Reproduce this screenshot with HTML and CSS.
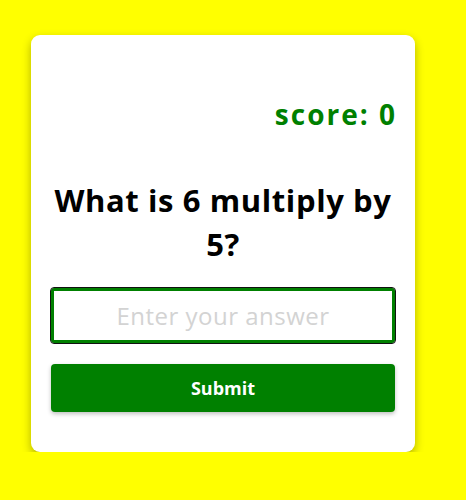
FILE: index.html
```html
<!DOCTYPE html>
<html>
<head>
<meta charset="utf-8">
<link rel="stylesheet" href="styles.css">
</head>
<body>
<div class="card">
  <div class="score">score: 0</div>
  <h1 class="question">What is 6 multiply by 5?</h1>
  <input class="answer" type="text" placeholder="Enter your answer">
  <button class="submit">Submit</button>
</div>
</body>
</html>
```
FILE: styles.css
```css
html, body {
  margin: 0;
  background: #ffff00;
}
body {
  padding: 35px 0 0 31px;
  font-family: "Comic Sans MS", "Open Sans", sans-serif;
}
.card {
  width: 344px;
  background: #fff;
  border-radius: 9px;
  padding: 60px 20px 40px;
  box-shadow: 0 4px 10px rgba(0,0,0,0.3);
  display: flex;
  flex-direction: column;
}
.score {
  text-align: right;
  color: #008000;
  font-weight: bold;
  font-size: 28px;
  line-height: 39px;
  letter-spacing: 2px;
  margin-right: -2px;
}
.question {
  margin: 44px 0 22px;
  text-align: center;
  font-size: 31px;
  line-height: 44px;
  font-weight: bold;
  color: #000;
  letter-spacing: 0.6px;
}
.answer {
  box-sizing: border-box;
  height: 55px;
  width: 100%;
  border: 3px solid #008000;
  outline: 1px solid #111;
  border-radius: 3px;
  font-family: inherit;
  font-size: 24px;
  letter-spacing: 0.5px;
  text-align: center;
  margin: 0;
}
.answer::placeholder {
  color: #d3d3d3;
}
.submit {
  margin-top: 21px;
  height: 48px;
  width: 100%;
  border: none;
  border-radius: 4px;
  background: #008000;
  color: #fff;
  font-family: inherit;
  font-weight: bold;
  font-size: 18px;
  box-shadow: 0 2px 4px rgba(0,0,0,0.25);
}
```
